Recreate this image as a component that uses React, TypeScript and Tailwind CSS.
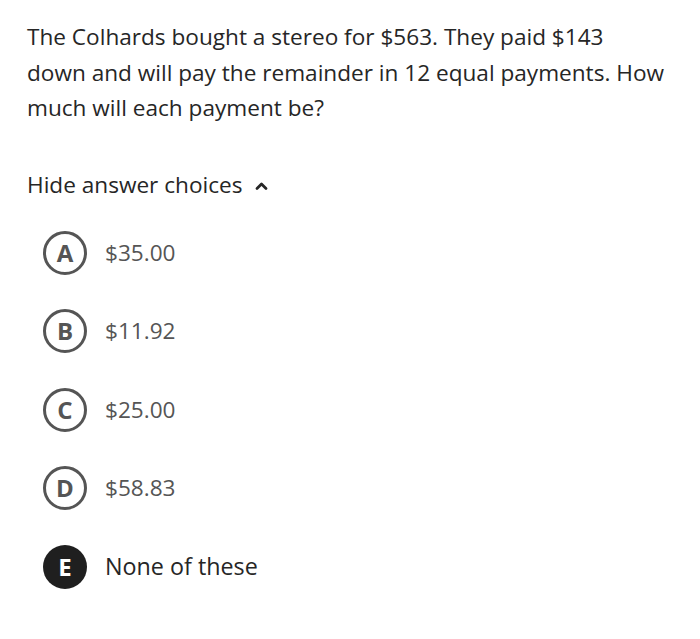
const choices = [
  { letter: 'A', text: '$35.00' },
  { letter: 'B', text: '$11.92' },
  { letter: 'C', text: '$25.00' },
  { letter: 'D', text: '$58.83' },
]

export default function App() {
  return (
    <div
      className="w-[700px] h-[639px] bg-white text-[#262626] overflow-hidden"
      style={{ fontFamily: '"Open Sans", "Noto Sans", sans-serif' }}
    >
      <div className="pl-[27px] pr-[20px] pt-[19px]">
        <p className="text-[22.6px] leading-[35.5px] whitespace-nowrap">
          The Colhards bought a stereo for $563. They paid $143
          <br />
          down and will pay the remainder in 12 equal payments. How
          <br />
          much will each payment be?
        </p>
        <button className="mt-[44px] flex items-center gap-[13px] text-[22.6px] leading-[30px] text-[#262626]">
          Hide answer choices
          <svg width="13" height="10" viewBox="0 0 13 10" className="mt-[2px]">
            <path d="M2 7.5 L6.5 3 L11 7.5" fill="none" stroke="#262626" strokeWidth="2.8" strokeLinecap="round" strokeLinejoin="round" />
          </svg>
        </button>
        <ul className="mt-[31px] ml-[16px] flex flex-col gap-[34.5px]">
          {choices.map((c) => (
            <li key={c.letter} className="flex items-center gap-[18px]">
              <span className="w-[44px] h-[44px] rounded-full border-[3px] border-[#555] flex items-center justify-center text-[24px] font-bold text-[#555]">
                {c.letter}
              </span>
              <span className="text-[22.6px] text-[#555]">{c.text}</span>
            </li>
          ))}
          <li className="flex items-center gap-[18px]">
            <span className="w-[44px] h-[44px] rounded-full bg-[#1f1f1f] flex items-center justify-center text-[24px] font-bold text-white">
              E
            </span>
            <span className="text-[23.3px] text-[#262626]">None of these</span>
          </li>
        </ul>
      </div>
    </div>
  )
}
